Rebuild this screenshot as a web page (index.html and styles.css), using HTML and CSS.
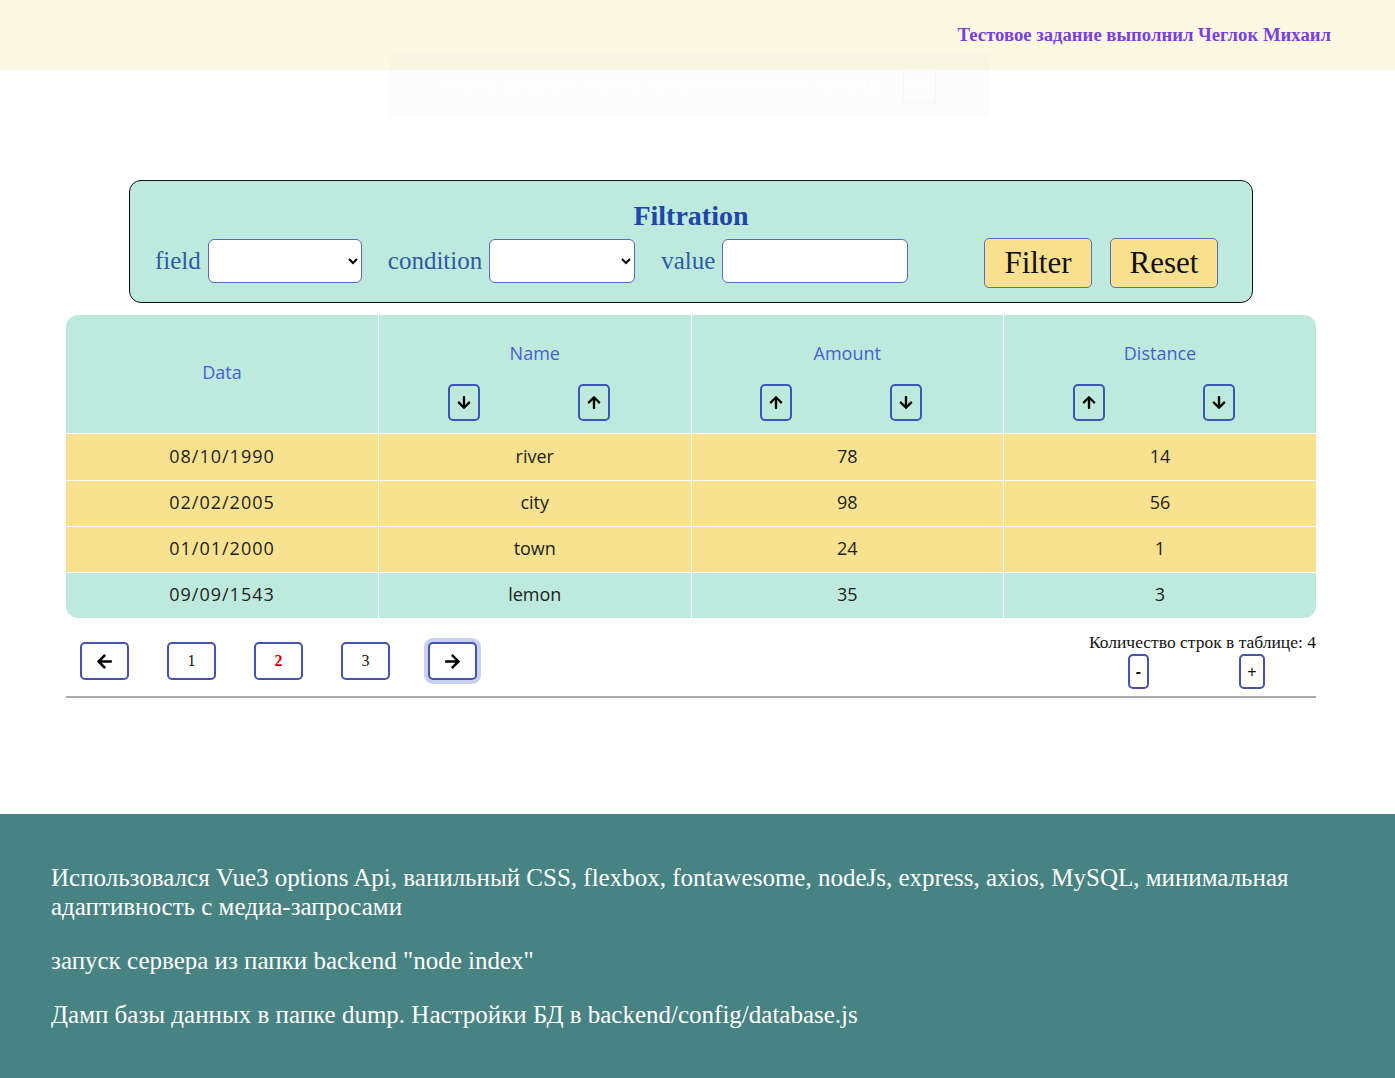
FILE: index.html
```html
<!DOCTYPE html>
<html lang="ru">
<head>
<meta charset="utf-8">
<title>Таблица</title>
<link rel="stylesheet" href="styles.css">
</head>
<body>
<header class="top">
  <span class="author">Тестовое задание выполнил Чеглок Михаил</span>
</header>
<div class="toast">
  <span class="toast-text">Чтобы добавить строку, заполните все поля таблицы</span>
  <span class="toast-btn">ОК</span>
</div>
<main class="main">
  <section class="filter">
    <h2 class="filter-title">Filtration</h2>
    <div class="filter-row">
      <label class="group"><span class="lbl">field</span><select class="sel sel-field"><option></option></select></label>
      <label class="group"><span class="lbl">condition</span><select class="sel sel-cond"><option></option></select></label>
      <label class="group"><span class="lbl">value</span><input class="inp" type="text"></label>
      <div class="actions">
        <button class="fbtn">Filter</button>
        <button class="fbtn">Reset</button>
      </div>
    </div>
  </section>

  <div class="table-wrap">
    <table class="grid">
      <thead>
        <tr>
          <th class="th-plain"><div class="th-title">Data</div></th>
          <th>
            <div class="th-title">Name</div>
            <div class="sorts">
              <button class="sbtn"><svg viewBox="0 0 448 512"><path d="M413.1 222.5l22.2 22.2c9.4 9.4 9.4 24.6 0 33.9L241 473c-9.4 9.4-24.6 9.4-33.9 0L12.7 278.6c-9.4-9.4-9.4-24.6 0-33.9l22.2-22.2c9.5-9.5 25-9.3 34.3.4L184 343.4V56c0-13.3 10.7-24 24-24h32c13.3 0 24 10.7 24 24v287.4l114.8-120.5c9.3-9.8 24.8-10 34.3-.4z"/></svg></button>
              <button class="sbtn"><svg viewBox="0 0 448 512"><path d="M34.9 289.5l-22.2-22.2c-9.4-9.4-9.4-24.6 0-33.9L207 39c9.4-9.4 24.6-9.4 33.9 0l194.3 194.3c9.4 9.4 9.4 24.6 0 33.9L413 289.4c-9.5 9.5-25 9.3-34.3-.4L264 168.6V456c0 13.3-10.7 24-24 24h-32c-13.3 0-24-10.7-24-24V168.6L69.2 289.1c-9.3 9.8-24.8 10-34.3.4z"/></svg></button>
            </div>
          </th>
          <th>
            <div class="th-title">Amount</div>
            <div class="sorts">
              <button class="sbtn"><svg viewBox="0 0 448 512"><path d="M34.9 289.5l-22.2-22.2c-9.4-9.4-9.4-24.6 0-33.9L207 39c9.4-9.4 24.6-9.4 33.9 0l194.3 194.3c9.4 9.4 9.4 24.6 0 33.9L413 289.4c-9.5 9.5-25 9.3-34.3-.4L264 168.6V456c0 13.3-10.7 24-24 24h-32c-13.3 0-24-10.7-24-24V168.6L69.2 289.1c-9.3 9.8-24.8 10-34.3.4z"/></svg></button>
              <button class="sbtn"><svg viewBox="0 0 448 512"><path d="M413.1 222.5l22.2 22.2c9.4 9.4 9.4 24.6 0 33.9L241 473c-9.4 9.4-24.6 9.4-33.9 0L12.7 278.6c-9.4-9.4-9.4-24.6 0-33.9l22.2-22.2c9.5-9.5 25-9.3 34.3.4L184 343.4V56c0-13.3 10.7-24 24-24h32c13.3 0 24 10.7 24 24v287.4l114.8-120.5c9.3-9.8 24.8-10 34.3-.4z"/></svg></button>
            </div>
          </th>
          <th>
            <div class="th-title">Distance</div>
            <div class="sorts">
              <button class="sbtn"><svg viewBox="0 0 448 512"><path d="M34.9 289.5l-22.2-22.2c-9.4-9.4-9.4-24.6 0-33.9L207 39c9.4-9.4 24.6-9.4 33.9 0l194.3 194.3c9.4 9.4 9.4 24.6 0 33.9L413 289.4c-9.5 9.5-25 9.3-34.3-.4L264 168.6V456c0 13.3-10.7 24-24 24h-32c-13.3 0-24-10.7-24-24V168.6L69.2 289.1c-9.3 9.8-24.8 10-34.3.4z"/></svg></button>
              <button class="sbtn"><svg viewBox="0 0 448 512"><path d="M413.1 222.5l22.2 22.2c9.4 9.4 9.4 24.6 0 33.9L241 473c-9.4 9.4-24.6 9.4-33.9 0L12.7 278.6c-9.4-9.4-9.4-24.6 0-33.9l22.2-22.2c9.5-9.5 25-9.3 34.3.4L184 343.4V56c0-13.3 10.7-24 24-24h32c13.3 0 24 10.7 24 24v287.4l114.8-120.5c9.3-9.8 24.8-10 34.3-.4z"/></svg></button>
            </div>
          </th>
        </tr>
      </thead>
      <tbody>
        <tr class="row-y first"><td class="date">08/10/1990</td><td>river</td><td>78</td><td>14</td></tr>
        <tr class="row-y"><td class="date">02/02/2005</td><td>city</td><td>98</td><td>56</td></tr>
        <tr class="row-y"><td class="date">01/01/2000</td><td>town</td><td>24</td><td>1</td></tr>
        <tr class="row-m"><td class="date">09/09/1543</td><td>lemon</td><td>35</td><td>3</td></tr>
      </tbody>
    </table>
  </div>

  <div class="pager">
    <div class="pages">
      <button class="pbtn"><svg viewBox="0 0 448 512"><path d="M257.5 445.1l-22.2 22.2c-9.4 9.4-24.6 9.4-33.9 0L7 273c-9.4-9.4-9.4-24.6 0-33.9L201.4 44.7c9.4-9.4 24.6-9.4 33.9 0l22.2 22.2c9.5 9.5 9.3 25-.4 34.3L136.6 216H424c13.3 0 24 10.7 24 24v32c0 13.3-10.7 24-24 24H136.6l120.5 114.8c9.8 9.3 10 24.8.4 34.3z"/></svg></button>
      <button class="pbtn">1</button>
      <button class="pbtn current">2</button>
      <button class="pbtn">3</button>
      <button class="pbtn focused"><svg viewBox="0 0 448 512"><path d="M190.5 66.9l22.2-22.2c9.4-9.4 24.6-9.4 33.9 0L441 239c9.4 9.4 9.4 24.6 0 33.9L246.6 467.3c-9.4 9.4-24.6 9.4-33.9 0l-22.2-22.2c-9.5-9.5-9.3-25 .4-34.3L311.4 296H24c-13.3 0-24-10.7-24-24v-32c0-13.3 10.7-24 24-24h287.4L190.9 101.2c-9.8-9.3-10-24.8-.4-34.3z"/></svg></button>
    </div>
    <div class="rows-ctl">
      <div class="rows-text">Количество строк в таблице: 4</div>
      <div class="rows-btns">
        <button class="rbtn minus">-</button>
        <button class="rbtn plus">+</button>
      </div>
    </div>
  </div>
</main>
<footer class="foot">
  <p>Использовался Vue3 options Api, ванильный CSS, flexbox, fontawesome, nodeJs, express, axios, MySQL, минимальная адаптивность с медиа-запросами</p>
  <p>запуск сервера из папки backend "node index"</p>
  <p>Дамп базы данных в папке dump. Настройки БД в backend/config/database.js</p>
</footer>
</body>
</html>
```
FILE: styles.css
```css
html, body {
  margin: 0;
  padding: 0;
  background: #ffffff;
  font-family: "Liberation Serif", "Times New Roman", serif;
}

.top {
  height: 70px;
  background: #fcf9e3;
  display: flex;
  justify-content: flex-end;
  align-items: center;
  padding-right: 64px;
}

.author {
  font-weight: bold;
  font-size: 18.7px;
  color: #7a3fe0;
}

.toast {
  position: absolute;
  left: 390px;
  top: 52px;
  width: 600px;
  height: 65px;
  background: rgba(235, 235, 235, 0.14);
  display: flex;
  align-items: center;
  justify-content: center;
  gap: 16px;
  font-family: "Open Sans", sans-serif;
  font-size: 17px;
  color: rgba(255, 255, 255, 0.95);
}

.toast-btn {
  border: 1px solid rgba(240, 240, 240, 0.5);
  padding: 6px 4px;
}

.main {
  width: 1250px;
  margin-left: 66px;
  padding-top: 110px;
  padding-bottom: 116px;
}

.filter {
  width: 1124px;
  margin: 0 0 0 63px;
  box-sizing: border-box;
  background: #bdeadd;
  border: 1px solid #111;
  border-radius: 12px;
  padding: 19px 0 14px;
}

.filter-title {
  margin: 0 0 6px;
  text-align: center;
  font-size: 28px;
  line-height: 32px;
  color: #2046a6;
  font-weight: bold;
}

.filter-row {
  display: flex;
  align-items: flex-start;
  padding: 0 34px 0 25px;
}

.group {
  display: flex;
  align-items: flex-start;
  margin-right: 26px;
}

.lbl {
  font-size: 25px;
  line-height: 45px;
  color: #2f5ba5;
  margin-right: 7px;
}

.sel {
  height: 44px;
  border: 1px solid #5a68c8;
  border-radius: 6px;
  background: #fff;
  margin-top: 1px;
  font-size: 16px;
}

.sel-field {
  width: 154px;
}

.sel-cond {
  width: 146px;
}

.inp {
  width: 186px;
  height: 44px;
  box-sizing: border-box;
  border: 1px solid #5a68c8;
  border-radius: 6px;
  background: #fff;
  margin-top: 1px;
}

.actions {
  margin-left: auto;
  display: flex;
  gap: 18px;
}

.fbtn {
  width: 108px;
  height: 50px;
  padding: 0;
  background: #f8e08e;
  border: 1px solid #5b6fc0;
  border-radius: 5px;
  font-family: "Liberation Serif", serif;
  font-size: 31px;
  color: #111;
}

.table-wrap {
  margin-top: 12px;
  border-radius: 12px;
  overflow: hidden;
}

.grid {
  width: 100%;
  border-collapse: collapse;
  table-layout: fixed;
  font-family: "Open Sans", sans-serif;
}

.grid th {
  background: #bdeadd;
  height: 118px;
  box-sizing: border-box;
  padding: 14px 0 0;
  vertical-align: middle;
  border-left: 1px solid #fff;
}

.grid th.th-plain {
  padding: 0 0 4px;
}

.grid th:first-child, .grid td:first-child {
  border-left: none;
}

.th-title {
  font-size: 18px;
  font-weight: 500;
  color: #4a5ed3;
  line-height: 24px;
}

.sorts {
  display: flex;
  justify-content: center;
  gap: 98px;
  margin-top: 19px;
  padding-right: 12px;
}

.sbtn {
  width: 32px;
  height: 37px;
  box-sizing: border-box;
  border: 2px solid #3f56b6;
  border-radius: 5px;
  background: transparent;
  display: flex;
  align-items: center;
  justify-content: center;
  padding: 0;
}

.sbtn svg {
  width: 14px;
  height: 15px;
  fill: #000;
}

.grid td {
  height: 46px;
  box-sizing: border-box;
  text-align: center;
  font-size: 18px;
  color: #1d1d1d;
  border-top: 1px solid #fff;
  border-left: 1px solid #fff;
  padding: 0 0 2px;
}

.grid tr.first td {
  height: 47px;
}

.grid td.date {
  letter-spacing: 1px;
}

.row-y td {
  background: #f8e28f;
}

.row-m td {
  background: #bdeadd;
}

.pager {
  margin-top: 12px;
  display: flex;
  justify-content: space-between;
  align-items: flex-start;
  border-bottom: 2px solid #ababab;
  padding-bottom: 7px;
}

.pages {
  display: flex;
  gap: 38px;
  padding-top: 12px;
  padding-left: 14px;
}

.pbtn {
  width: 49px;
  height: 38px;
  box-sizing: border-box;
  border: 2px solid #4752ad;
  border-radius: 5px;
  background: #fff;
  font-family: "Liberation Serif", serif;
  font-size: 16px;
  color: #111;
  display: flex;
  align-items: center;
  justify-content: center;
  padding: 0;
}

.pbtn svg {
  width: 17px;
  height: 17px;
  fill: #000;
}

.pbtn.current {
  color: #d90000;
  font-weight: bold;
}

.pbtn.focused {
  box-shadow: 0 0 0 4px #c7d1f1;
}

.rows-ctl {
  padding-top: 2px;
  display: flex;
  flex-direction: column;
  align-items: flex-end;
}

.rows-text {
  font-size: 17.5px;
  line-height: 20px;
  color: #111;
}

.rows-btns {
  width: 227px;
  display: flex;
  margin-top: 2px;
}

.rbtn {
  height: 35px;
  box-sizing: border-box;
  border: 2px solid #4752ad;
  border-radius: 5px;
  background: #fff;
  padding: 0;
  font-family: "Liberation Sans", sans-serif;
  color: #111;
}

.rbtn.minus {
  width: 21px;
  margin-left: 39px;
  font-weight: bold;
  font-size: 16px;
}

.rbtn.plus {
  width: 26px;
  margin-left: 90px;
  font-size: 16px;
  font-weight: normal;
}

.foot {
  background: #478382;
  color: #ffffff;
  padding: 24px 51px 24px;
  font-size: 25px;
  line-height: 29px;
}

.foot p {
  margin: 25px 0;
}
```
